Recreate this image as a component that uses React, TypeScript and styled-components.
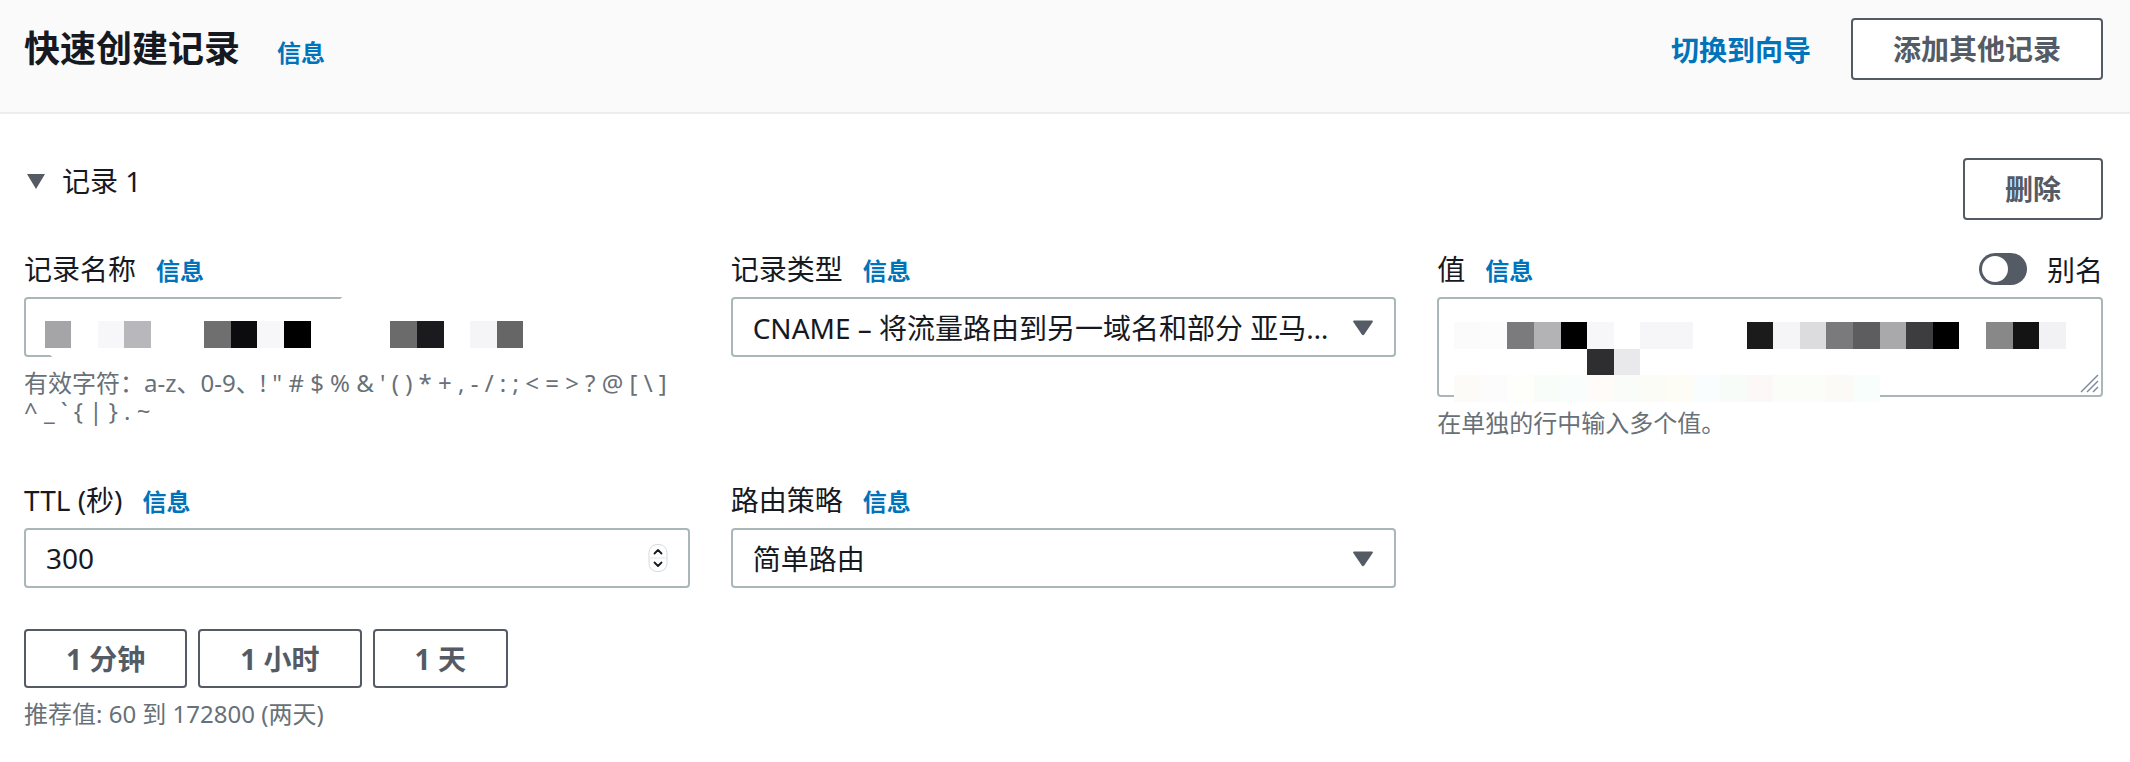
import React from "react";
import styled, { createGlobalStyle } from "styled-components";

const GlobalStyle = createGlobalStyle`
  html, body { margin: 0; padding: 0; background: #ffffff; }
  body {
    font-family: "Noto Sans", "Noto Sans CJK SC", sans-serif;
    color: #16191f;
  }
  * { box-sizing: border-box; }
`;

const Page = styled.div`
  width: 2130px;
  min-height: 762px;
  background: #ffffff;
`;

const Header = styled.header`
  display: flex;
  align-items: center;
  justify-content: space-between;
  height: 114px;
  padding: 18px 27px 32px 24px;
  background: #fafafa;
  border-bottom: 2px solid #eaeded;
`;

const TitleGroup = styled.div`
  display: flex;
  align-items: baseline;
  gap: 37px;
`;

const Title = styled.h1`
  margin: 0;
  font-size: 36px;
  line-height: 48px;
  font-weight: 700;
  color: #16191f;
`;

const InfoLink = styled.a<{ $size?: number }>`
  font-size: ${(p) => p.$size ?? 24}px;
  font-weight: 700;
  color: #0073bb;
  text-decoration: none;
  cursor: pointer;
`;

const Actions = styled.div`
  display: flex;
  align-items: center;
  gap: 40px;
`;

const Button = styled.button<{ $height?: number }>`
  height: ${(p) => p.$height ?? 62}px;
  padding: 0 40px;
  border: 2px solid #545b64;
  border-radius: 4px;
  background: #ffffff;
  color: #545b64;
  font-family: "Noto Sans", "Noto Sans CJK SC", sans-serif;
  font-size: 28px;
  font-weight: 700;
  line-height: 1;
  white-space: nowrap;
  cursor: pointer;
`;

const Section = styled.section`
  padding: 44px 27px 0 24px;
`;

const SectionHead = styled.div`
  display: flex;
  align-items: flex-start;
  justify-content: space-between;
`;

const SectionTitle = styled.div`
  display: flex;
  align-items: center;
  gap: 17px;
  margin-top: 5px;
  font-size: 28px;
  line-height: 36px;
  color: #16191f;
`;

const Caret = styled.span`
  width: 0;
  height: 0;
  border-left: 9px solid transparent;
  border-right: 9px solid transparent;
  border-top: 15px solid #545b64;
  margin-left: 3px;
`;

const Grid = styled.div`
  display: grid;
  grid-template-columns: repeat(3, 1fr);
  column-gap: 41px;
  row-gap: 45px;
  margin-top: 31px;
`;

const Field = styled.div`
  display: flex;
  flex-direction: column;
  min-width: 0;
`;

const LabelRow = styled.div<{ $spread?: boolean }>`
  display: flex;
  align-items: center;
  justify-content: ${(p) => (p.$spread ? "space-between" : "flex-start")};
  height: 36px;
`;

const LabelGroup = styled.div`
  display: flex;
  align-items: center;
  gap: 20px;
`;

const Label = styled.label`
  font-size: 28px;
  line-height: 36px;
  color: #16191f;
`;

const Box = styled.div<{ $height?: number }>`
  position: relative;
  display: flex;
  align-items: center;
  height: ${(p) => p.$height ?? 60}px;
  margin-top: 10px;
  padding: 0 20px;
  border: 2px solid #aab7b8;
  border-radius: 4px;
  background: #ffffff;
`;

const MosaicBox = styled(Box)`
  align-items: flex-start;
  padding: 0;
`;

const Mosaic = styled.div<{ $cols: number; $left: number; $top: number }>`
  position: relative;
  z-index: 2;
  display: grid;
  grid-template-columns: repeat(${(p) => p.$cols}, 26.6px);
  grid-auto-rows: 26.6px;
  margin-left: ${(p) => p.$left}px;
  margin-top: ${(p) => p.$top}px;
`;

const Cell = styled.i<{ $c: string }>`
  display: block;
  background: ${(p) => p.$c || "transparent"};
`;

const Redaction = styled.i`
  position: absolute;
  z-index: 1;
  display: block;
  background: #ffffff;
  border-radius: 14px;
`;

const Help = styled.div`
  margin-top: 12px;
  font-size: 24px;
  line-height: 28px;
  color: #687078;
`;

const TextInput = styled.input`
  flex: 1;
  min-width: 0;
  border: none;
  outline: none;
  padding: 0;
  background: transparent;
  font-family: "Noto Sans", "Noto Sans CJK SC", sans-serif;
  font-size: 28px;
  color: #16191f;
`;

const SelectText = styled.span`
  flex: 1;
  min-width: 0;
  overflow: hidden;
  white-space: nowrap;
  font-size: 28px;
  color: #16191f;
`;

const Toggle = styled.span`
  display: flex;
  align-items: center;
  width: 48px;
  height: 32px;
  padding: 0 3px;
  border-radius: 16px;
  background: #545b64;
`;

const Knob = styled.span`
  width: 26px;
  height: 26px;
  border-radius: 50%;
  background: #ffffff;
`;

const ToggleGroup = styled.div`
  display: flex;
  align-items: center;
  gap: 20px;
  font-size: 28px;
  color: #16191f;
`;

const ButtonRow = styled.div`
  display: flex;
  gap: 11px;
  margin-top: 41px;
`;

const Grip = styled.svg`
  position: absolute;
  right: 2px;
  bottom: 2px;
`;

const nameRow = [
  "#a5a5a7", "", "#f7f7fa", "#b8b8bc", "", "", "#6f6f6f", "#0c0c0e", "#f7f7fa",
  "#000000", "", "", "", "#6b6b6b", "#1b1b1f", "", "#f5f5f8", "#666666",
];

const valueRow1 = [
  "#fbfbfc", "#fcfcfd", "#7b7b7d", "#b3b3b5", "#000000", "#f7f7fa", "", "#f6f6f9",
  "#f6f6f9", "", "", "#1b1b1b", "#f5f5f8", "#dcdcde", "#7a7a7c", "#5d5d5f",
  "#a9a9ab", "#3d3d3f", "#000000", "", "#888888", "#141414", "#f2f2f5",
];

const valueRow2 = valueRow1.map((_, i) =>
  i === 5 ? "#2e2e30" : i === 6 ? "#e9e9eb" : ""
);

const valueRow3 = valueRow1.map((_, i) =>
  ["#fdfbf8", "#fdfcfd", "#fefefa", "#f9fdf9", "#f9fdfb", "#fefbf9", "#fafcf9", "#fcfcf6", "#fdfdf6", "#f9fdfe", "#f8fcf8", "#fdf8f8", "#fafdf8", "#fbfdf9", "#fbfaf6", "#f8fefc"][i] ?? ""
);

const Info = ({ size }: { size?: number }) => <InfoLink $size={size}>信息</InfoLink>;

const DownCaret = () => (
  <svg width="22" height="17" viewBox="0 0 22 17">
    <path d="M2 1.5 L20 1.5 Q21.5 1.5 20.7 3 L12.2 15.5 Q11 17 9.8 15.5 L1.3 3 Q0.5 1.5 2 1.5 Z" fill="#545b64" />
  </svg>
);

const Spinner = () => (
  <svg width="20" height="28" viewBox="0 0 20 28">
    <rect x="1" y="0.5" width="18" height="27" rx="8" fill="#ffffff" stroke="#d5dbdb" />
    <line x1="2" y1="14" x2="18" y2="14" stroke="#e3e6e6" />
    <path d="M6.5 9.5 L10 6 L13.5 9.5" fill="none" stroke="#16191f" strokeWidth="1.8" strokeLinecap="round" strokeLinejoin="round" />
    <path d="M6.5 18.5 L10 22 L13.5 18.5" fill="none" stroke="#16191f" strokeWidth="1.8" strokeLinecap="round" strokeLinejoin="round" />
  </svg>
);

export default function App() {
  return (
    <Page>
      <GlobalStyle />
      <Header>
        <TitleGroup>
          <Title>快速创建记录</Title>
          <Info />
        </TitleGroup>
        <Actions>
          <InfoLink $size={28}>切换到向导</InfoLink>
          <Button>添加其他记录</Button>
        </Actions>
      </Header>

      <Section>
        <SectionHead>
          <SectionTitle>
            <Caret />
            <span>记录 1</span>
          </SectionTitle>
          <Button>删除</Button>
        </SectionHead>

        <Grid>
          <Field>
            <LabelRow>
              <LabelGroup>
                <Label>记录名称</Label>
                <Info />
              </LabelGroup>
            </LabelRow>
            <MosaicBox>
              <Redaction style={{ left: 21, top: 9, right: -30, bottom: -5 }} />
              <Redaction style={{ left: 310, top: -4, right: -30, bottom: -5 }} />
              <Mosaic $cols={nameRow.length} $left={18.6} $top={22}>
                {nameRow.map((c, i) => (
                  <Cell key={i} $c={c} />
                ))}
              </Mosaic>
            </MosaicBox>
            <Help>
              有效字符：a-z、0-9、! " # $ % &amp; ' ( ) * + , - / : ; &lt; = &gt; ? @ [ \ ]
              <br />
              ^ _ ` {"{"} | {"}"} . ~
            </Help>
          </Field>

          <Field>
            <LabelRow>
              <LabelGroup>
                <Label>记录类型</Label>
                <Info />
              </LabelGroup>
            </LabelRow>
            <Box>
              <SelectText>CNAME – 将流量路由到另一域名和部分 亚马…</SelectText>
              <DownCaret />
            </Box>
          </Field>

          <Field>
            <LabelRow $spread>
              <LabelGroup>
                <Label>值</Label>
                <Info />
              </LabelGroup>
              <ToggleGroup>
                <Toggle>
                  <Knob />
                </Toggle>
                <span>别名</span>
              </ToggleGroup>
            </LabelRow>
            <MosaicBox $height={100}>
              <Redaction style={{ left: 289, width: 122, bottom: -5, height: 14 }} />
              <Mosaic $cols={valueRow1.length} $left={14.8} $top={23}>
                {valueRow1.map((c, i) => (
                  <Cell key={`a${i}`} $c={c} />
                ))}
                {valueRow2.map((c, i) => (
                  <Cell key={`b${i}`} $c={c} />
                ))}
                {valueRow3.map((c, i) => (
                  <Cell key={`c${i}`} $c={c} />
                ))}
              </Mosaic>
              <Grip width="22" height="22" viewBox="0 0 22 22">
                <line x1="21" y1="4" x2="4" y2="21" stroke="#7d8998" strokeWidth="1.4" />
                <line x1="21" y1="10" x2="10" y2="21" stroke="#7d8998" strokeWidth="1.4" />
                <line x1="21" y1="16" x2="16" y2="21" stroke="#7d8998" strokeWidth="1.4" />
              </Grip>
            </MosaicBox>
            <Help>在单独的行中输入多个值。</Help>
          </Field>

          <Field>
            <LabelRow>
              <LabelGroup>
                <Label>TTL (秒)</Label>
                <Info />
              </LabelGroup>
            </LabelRow>
            <Box>
              <TextInput type="text" defaultValue="300" />
              <Spinner />
            </Box>
            <ButtonRow>
              <Button $height={59}>1 分钟</Button>
              <Button $height={59}>1 小时</Button>
              <Button $height={59}>1 天</Button>
            </ButtonRow>
            <Help>推荐值: 60 到 172800 (两天)</Help>
          </Field>

          <Field>
            <LabelRow>
              <LabelGroup>
                <Label>路由策略</Label>
                <Info />
              </LabelGroup>
            </LabelRow>
            <Box>
              <SelectText>简单路由</SelectText>
              <DownCaret />
            </Box>
          </Field>
        </Grid>
      </Section>
    </Page>
  );
}
